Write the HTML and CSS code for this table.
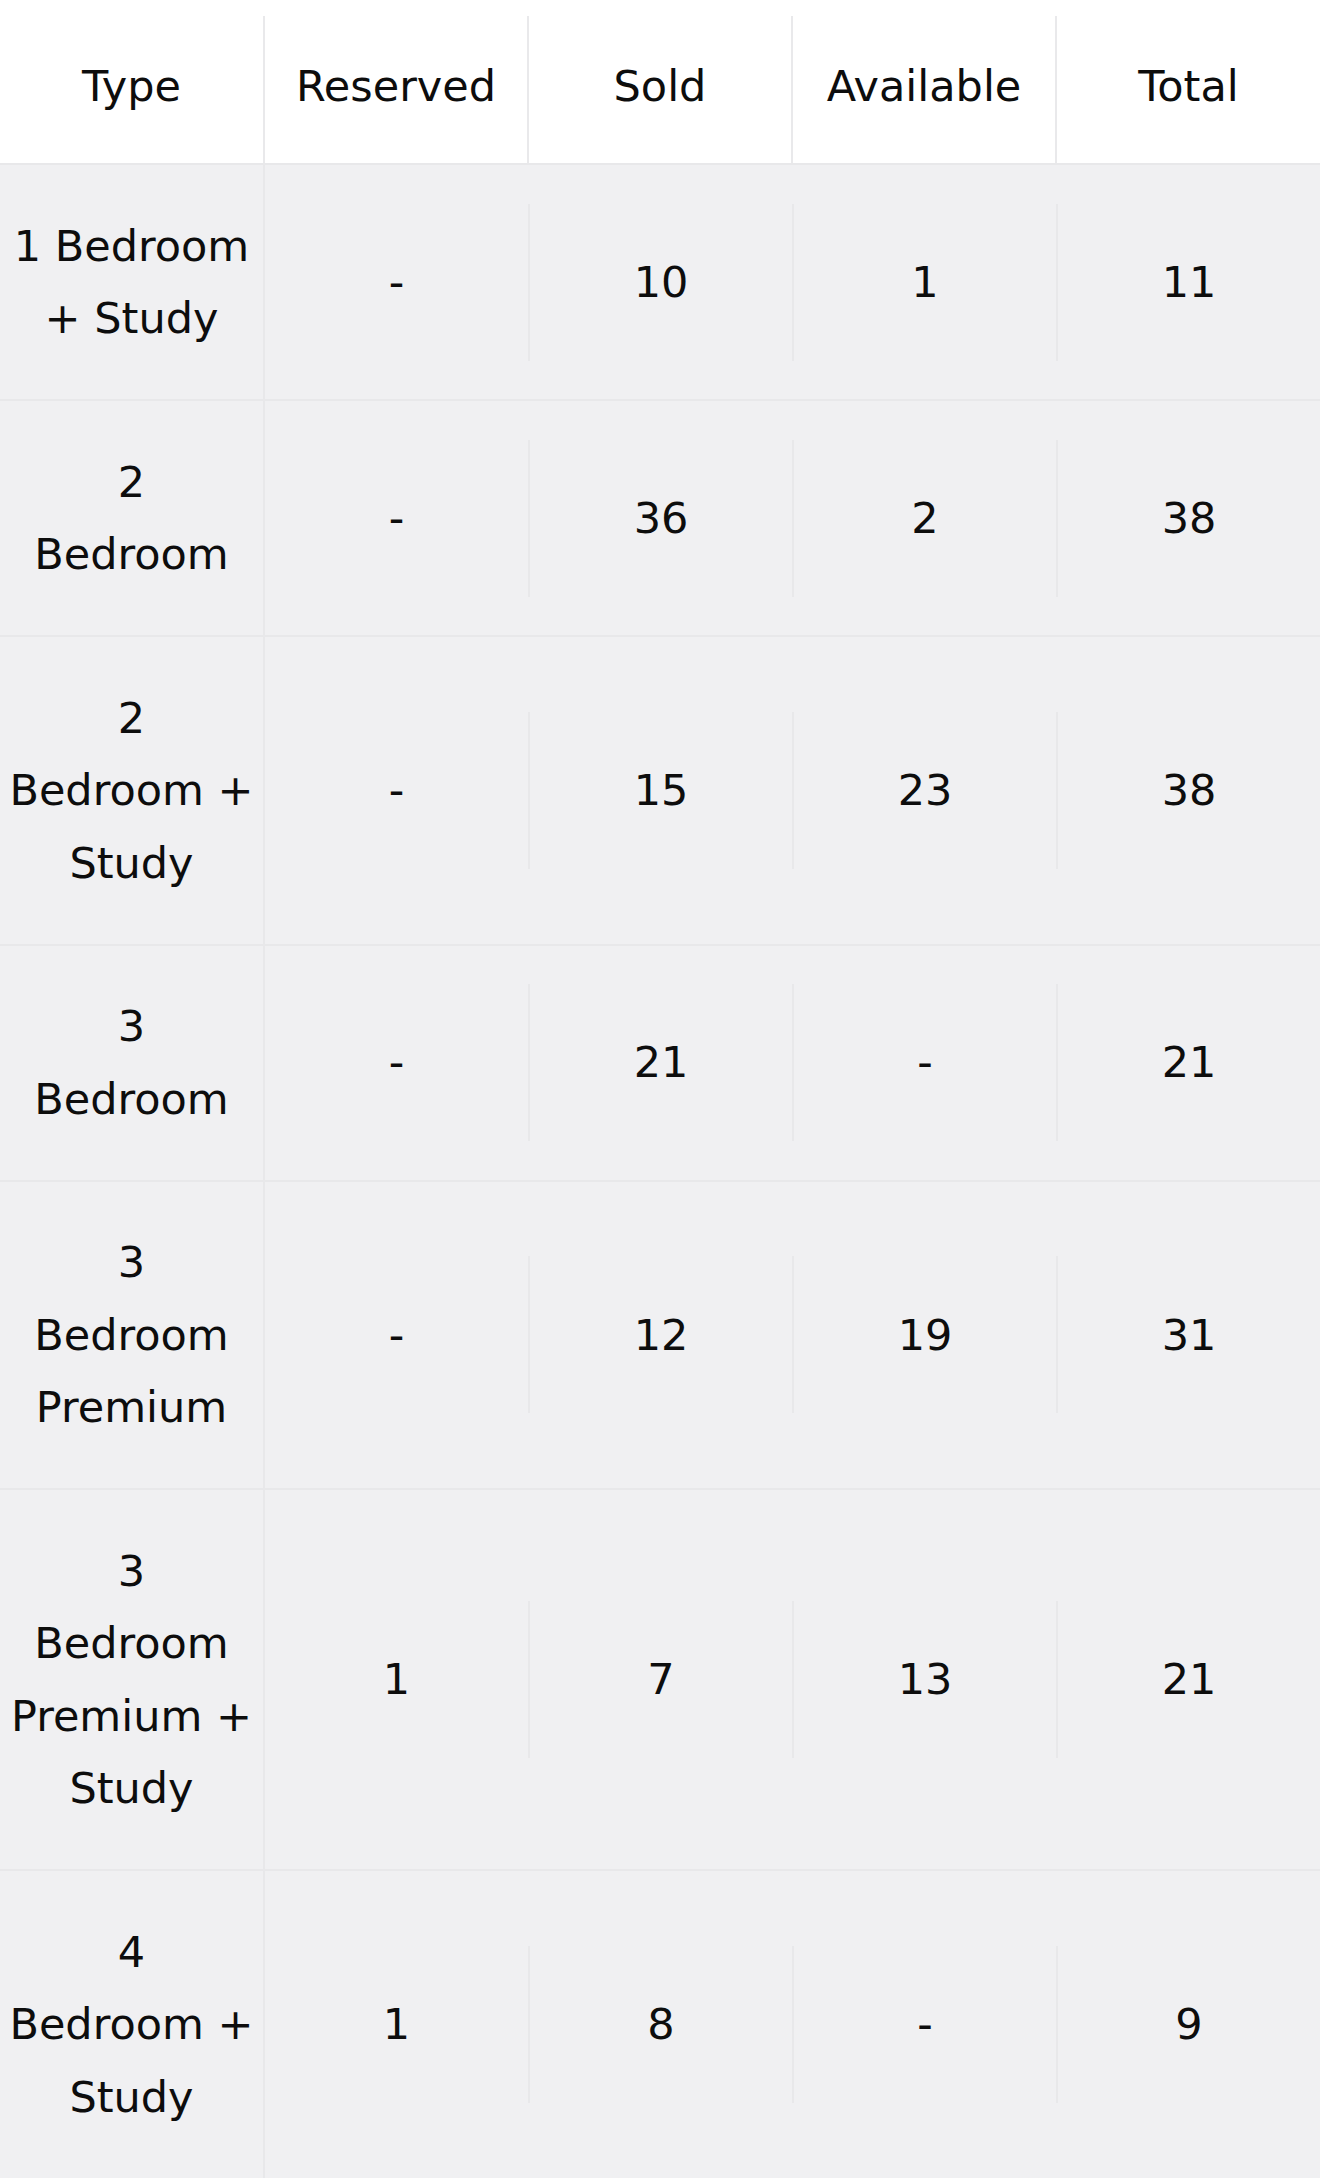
FILE: index.html
```html
<!DOCTYPE html>
<html lang="en">
<head>
<meta charset="utf-8">
<title>Unit availability</title>
<link rel="stylesheet" href="styles.css">
</head>
<body>
<table class="units">
  <thead>
    <tr>
      <th>Type</th>
      <th>Reserved</th>
      <th>Sold</th>
      <th>Available</th>
      <th>Total</th>
    </tr>
  </thead>
  <tbody>
    <tr>
      <td class="type">1 Bedroom<br>+ Study</td>
      <td class="num"><div class="cell first">-</div></td>
      <td class="num"><div class="cell">10</div></td>
      <td class="num"><div class="cell">1</div></td>
      <td class="num"><div class="cell">11</div></td>
    </tr>
    <tr>
      <td class="type">2<br>Bedroom</td>
      <td class="num"><div class="cell first">-</div></td>
      <td class="num"><div class="cell">36</div></td>
      <td class="num"><div class="cell">2</div></td>
      <td class="num"><div class="cell">38</div></td>
    </tr>
    <tr>
      <td class="type">2<br>Bedroom +<br>Study</td>
      <td class="num"><div class="cell first">-</div></td>
      <td class="num"><div class="cell">15</div></td>
      <td class="num"><div class="cell">23</div></td>
      <td class="num"><div class="cell">38</div></td>
    </tr>
    <tr>
      <td class="type">3<br>Bedroom</td>
      <td class="num"><div class="cell first">-</div></td>
      <td class="num"><div class="cell">21</div></td>
      <td class="num"><div class="cell">-</div></td>
      <td class="num"><div class="cell">21</div></td>
    </tr>
    <tr>
      <td class="type">3<br>Bedroom<br>Premium</td>
      <td class="num"><div class="cell first">-</div></td>
      <td class="num"><div class="cell">12</div></td>
      <td class="num"><div class="cell">19</div></td>
      <td class="num"><div class="cell">31</div></td>
    </tr>
    <tr>
      <td class="type">3<br>Bedroom<br>Premium +<br>Study</td>
      <td class="num"><div class="cell first">1</div></td>
      <td class="num"><div class="cell">7</div></td>
      <td class="num"><div class="cell">13</div></td>
      <td class="num"><div class="cell">21</div></td>
    </tr>
    <tr>
      <td class="type">4<br>Bedroom +<br>Study</td>
      <td class="num"><div class="cell first">1</div></td>
      <td class="num"><div class="cell">8</div></td>
      <td class="num"><div class="cell">-</div></td>
      <td class="num"><div class="cell">9</div></td>
    </tr>
  </tbody>
</table>
</body>
</html>
```

FILE: styles.css
```css
html, body {
  margin: 0;
  padding: 0;
  background: #ffffff;
}

body {
  padding-top: 16px;
  font-family: "DejaVu Sans", "Inter", sans-serif;
  font-size: 43px;
  font-weight: 400;
  color: #0d0d0d;
}

.units {
  width: 100%;
  border-collapse: collapse;
  table-layout: fixed;
}

.units th {
  background: #ffffff;
  font-weight: 400;
  line-height: 72.5px;
  padding: 34px 2px 40.5px;
  text-align: center;
  white-space: nowrap;
  border-bottom: 2px solid #e8e8ea;
  border-left: 2px solid #e9e9eb;
}

.units th:first-child {
  border-left: none;
}

.units tbody tr {
  background: #f0f0f2;
  border-bottom: 2px solid #e8e8ea;
}

.units tbody tr:last-child {
  border-bottom: none;
}

.type {
  line-height: 72.5px;
  padding: 44.5px 2px;
  text-align: center;
  white-space: nowrap;
  border-right: 2px solid #e8e8ea;
}

.num {
  padding: 0;
  vertical-align: middle;
  text-align: center;
}

.cell {
  line-height: 72.5px;
  padding: 42.25px 0;
  border-left: 2px solid #e8e8ea;
}

.cell.first {
  border-left: none;
}
```
